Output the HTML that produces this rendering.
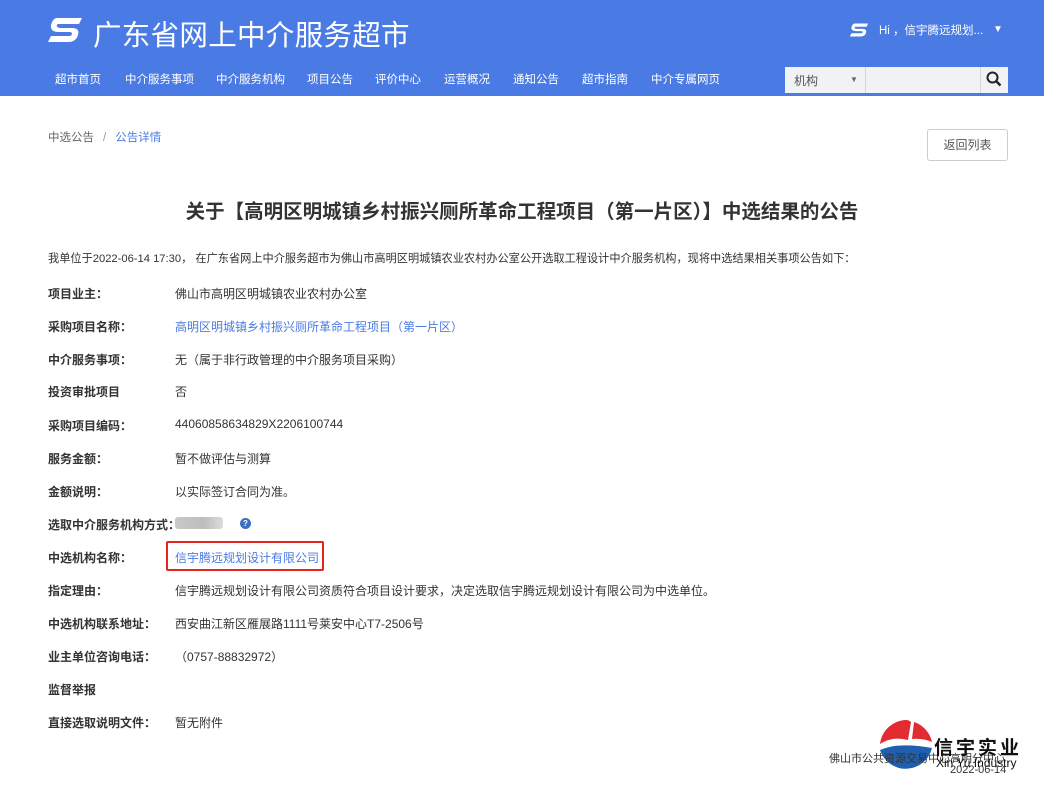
<!DOCTYPE html>
<html><head><meta charset="utf-8"><style>
*{margin:0;padding:0;box-sizing:border-box}
body{width:1044px;height:790px;overflow:hidden;background:#fff;font-family:"Liberation Sans","Noto Sans CJK SC",sans-serif;color:#333;position:relative}
.hd{position:absolute;left:0;top:0;width:1044px;height:96px;background:#4a7be4}
.abs{position:absolute;white-space:nowrap}
.title{left:93px;top:13px;font-size:28.5px;color:#fff;letter-spacing:0.3px}
.nav{top:71px;font-size:11.5px;color:#fff}
.row{position:absolute;left:48px;font-size:12px;white-space:nowrap}
.row b{font-weight:bold;color:#333}
.row .v{position:absolute;left:127px;top:0;color:#333}
.blue{color:#4a7be4 !important}
</style></head><body>
<div class="hd"></div>
<svg class="abs" style="left:47px;top:17px" width="36" height="26" viewBox="0 0 36 26"><path d="M10 1H35L32 7H12Q9 7 10 9.5Q11 11 14 11H25Q33 11 31 18Q29 25 21 25H1L4 19H22Q25 19 25 16.5Q25 15 22 15H12Q3 15 4 8Q6 1 10 1Z" fill="#fff"/></svg>
<div class="abs title">广东省网上中介服务超市</div>
<svg class="abs" style="left:849px;top:23px" width="20" height="14" viewBox="0 0 36 26"><path d="M10 1H35L32 7H12Q9 7 10 9.5Q11 11 14 11H25Q33 11 31 18Q29 25 21 25H1L4 19H22Q25 19 25 16.5Q25 15 22 15H12Q3 15 4 8Q6 1 10 1Z" fill="#fff"/></svg>
<div class="abs" style="left:879px;top:22px;font-size:11.5px;color:#fff">Hi ，信宇腾远规划...</div>
<div class="abs" style="left:993px;top:24px;font-size:10px;color:#fff">▼</div>
<div class="abs nav" style="left:55px">超市首页</div>
<div class="abs nav" style="left:125px">中介服务事项</div>
<div class="abs nav" style="left:216px">中介服务机构</div>
<div class="abs nav" style="left:307px">项目公告</div>
<div class="abs nav" style="left:375px">评价中心</div>
<div class="abs nav" style="left:444px">运营概况</div>
<div class="abs nav" style="left:513px">通知公告</div>
<div class="abs nav" style="left:582px">超市指南</div>
<div class="abs nav" style="left:651px">中介专属网页</div>
<div class="abs" style="left:785px;top:67px;width:223px;height:26px;background:#f0f2f5"></div>
<div class="abs" style="left:865px;top:67px;width:1px;height:26px;background:#d5d7da"></div>
<div class="abs" style="left:980px;top:67px;width:1px;height:26px;background:#d5d7da"></div>
<div class="abs" style="left:794px;top:72px;font-size:12px;color:#555">机构</div>
<div class="abs" style="left:850px;top:75px;font-size:8px;color:#666">▼</div>
<svg class="abs" style="left:986px;top:71px" width="16" height="16" viewBox="0 0 16 16"><circle cx="6.5" cy="6.5" r="5" fill="none" stroke="#222" stroke-width="2"/><path d="M10 10L14.5 14.5" stroke="#222" stroke-width="2.4"/></svg>

<div class="abs" style="left:48px;top:129px;font-size:11.5px;color:#666">中选公告<span style="color:#999;margin:0 9px">/</span><span class="blue">公告详情</span></div>
<div class="abs" style="left:927px;top:129px;width:81px;height:32px;border:1px solid #ccc;border-radius:3px;font-size:12px;color:#555;text-align:center;line-height:30px">返回列表</div>
<div class="abs" style="left:0;width:1044px;top:195px;text-align:center;font-size:19.5px;font-weight:bold;color:#333">关于【高明区明城镇乡村振兴厕所革命工程项目（第一片区）】中选结果的公告</div>
<div class="abs" style="left:48px;top:250px;font-size:11.2px;color:#333">我单位于2022-06-14 17:30， 在广东省网上中介服务超市为佛山市高明区明城镇农业农村办公室公开选取工程设计中介服务机构，现将中选结果相关事项公告如下：</div>

<div class="row" style="top:285px"><b>项目业主：</b><span class="v">佛山市高明区明城镇农业农村办公室</span></div>
<div class="row" style="top:318px"><b>采购项目名称：</b><span class="v blue">高明区明城镇乡村振兴厕所革命工程项目（第一片区）</span></div>
<div class="row" style="top:351px"><b>中介服务事项：</b><span class="v">无（属于非行政管理的中介服务项目采购）</span></div>
<div class="row" style="top:383px"><b>投资审批项目</b><span class="v">否</span></div>
<div class="row" style="top:417px"><b>采购项目编码：</b><span class="v">44060858634829X2206100744</span></div>
<div class="row" style="top:450px"><b>服务金额：</b><span class="v">暂不做评估与测算</span></div>
<div class="row" style="top:483px"><b>金额说明：</b><span class="v">以实际签订合同为准。</span></div>
<div class="row" style="top:516px"><b>选取中介服务机构方式：</b></div>
<div class="abs" style="left:175px;top:517px;width:48px;height:12px;background:linear-gradient(90deg,#c9c9c9,#bdbdbd 60%,#dcdcdc);border-radius:3px"></div>
<div class="abs" style="left:240px;top:518px;width:11px;height:11px;border-radius:50%;background:#3a6fc4;color:#fff;font-size:8px;font-weight:bold;text-align:center;line-height:11px">?</div>
<div class="row" style="top:549px"><b>中选机构名称：</b></div>
<div class="abs" style="left:166px;top:541px;width:158px;height:30px;border:2px solid #e8221c;border-radius:2px"></div>
<div class="abs blue" style="left:175px;top:549px;font-size:12px">信宇腾远规划设计有限公司</div>
<div class="row" style="top:582px"><b>指定理由：</b><span class="v">信宇腾远规划设计有限公司资质符合项目设计要求，决定选取信宇腾远规划设计有限公司为中选单位。</span></div>
<div class="row" style="top:615px"><b>中选机构联系地址：</b><span class="v">西安曲江新区雁展路1111号莱安中心T7-2506号</span></div>
<div class="row" style="top:648px"><b>业主单位咨询电话：</b><span class="v">（0757-88832972）</span></div>
<div class="row" style="top:681px"><b>监督举报</b></div>
<div class="row" style="top:714px"><b>直接选取说明文件：</b><span class="v">暂无附件</span></div>

<svg class="abs" style="left:878px;top:718px" width="56" height="58" viewBox="0 0 56 58"><path d="M28 2A27 27 0 0 0 2 26Q14 18 30 22L33 4Q31 2 28 2Z" fill="#e32b32"/><path d="M36 4A27 27 0 0 1 54 24Q44 20 34 21Z" fill="#e32b32"/><path d="M2 32Q20 24 54 30A27 27 0 0 1 2 32Z" fill="#1f5fae"/></svg>
<div class="abs" style="left:829px;top:750px;font-size:11px;color:#333">佛山市公共资源交易中心高明分中心</div>
<div class="abs" style="left:934px;top:733px;font-size:19px;font-weight:bold;color:#111;letter-spacing:3px">信宇实业</div>
<div class="abs" style="left:936px;top:756px;font-size:12px;color:#111">Xin Yu Industry</div>
<div class="abs" style="left:950px;top:764px;font-size:11px;color:#333">2022-06-14</div>
</body></html>
